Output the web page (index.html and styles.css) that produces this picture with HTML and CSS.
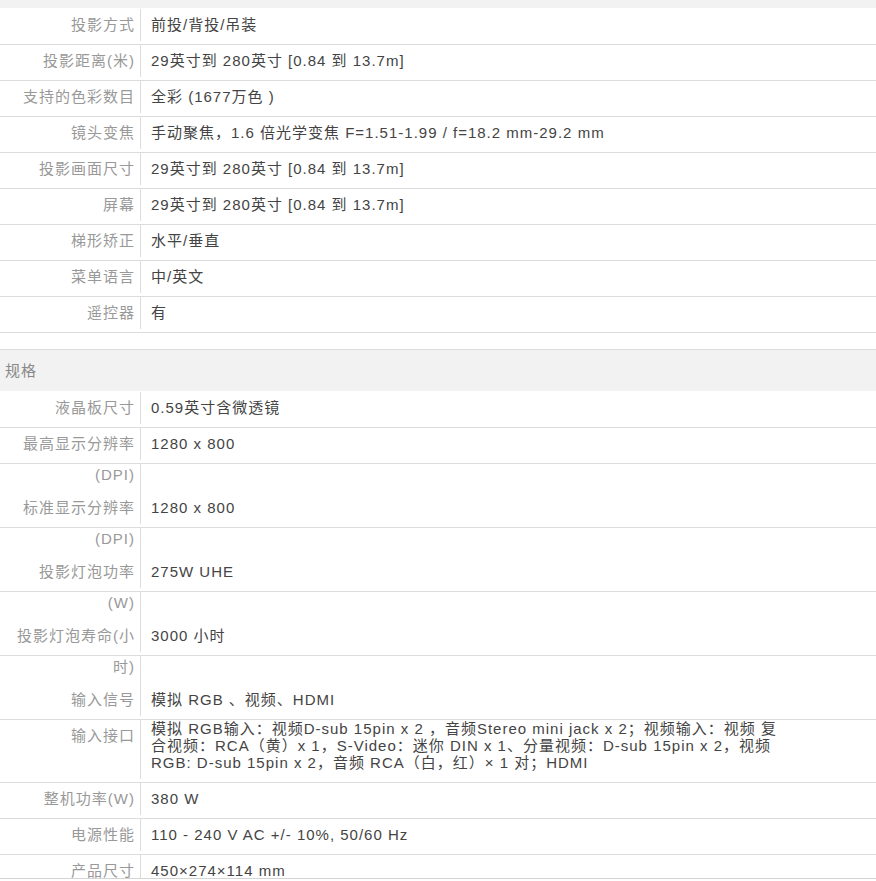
FILE: index.html
```html
<!DOCTYPE html>
<html lang="zh-CN">
<head>
    <meta charset="UTF-8">
    <meta name="viewport" content="width=device-width, initial-scale=1.0">
    <title>产品参数</title>
    <link rel="stylesheet" href="styles.css">
</head>
<body>
    <div class="params">
        <div class="section-end"></div>
        <div class="spec-list">
            <div class="row"><div class="name">投影方式</div><div class="val">前投/背投/吊装</div></div>
            <div class="row"><div class="name">投影距离(米)</div><div class="val">29英寸到 280英寸 [0.84 到 13.7m]</div></div>
            <div class="row"><div class="name">支持的色彩数目</div><div class="val">全彩 (1677万色 )</div></div>
            <div class="row"><div class="name">镜头变焦</div><div class="val">手动聚焦，1.6 倍光学变焦 F=1.51-1.99 / f=18.2 mm-29.2 mm</div></div>
            <div class="row"><div class="name">投影画面尺寸</div><div class="val">29英寸到 280英寸 [0.84 到 13.7m]</div></div>
            <div class="row"><div class="name">屏幕</div><div class="val">29英寸到 280英寸 [0.84 到 13.7m]</div></div>
            <div class="row"><div class="name">梯形矫正</div><div class="val">水平/垂直</div></div>
            <div class="row"><div class="name">菜单语言</div><div class="val">中/英文</div></div>
            <div class="row"><div class="name">遥控器</div><div class="val">有</div></div>
        </div>

        <div class="section">
            <div class="section-title">规格</div>
            <div class="spec-list">
                <div class="row"><div class="name">液晶板尺寸</div><div class="val">0.59英寸含微透镜</div></div>
                <div class="row"><div class="name">最高显示分辨率</div><div class="val">1280 x 800</div></div>
                <div class="row tall"><div class="name"><div class="carry">(DPI)</div>标准显示分辨率</div><div class="val">1280 x 800</div></div>
                <div class="row tall"><div class="name"><div class="carry">(DPI)</div>投影灯泡功率</div><div class="val">275W UHE</div></div>
                <div class="row tall"><div class="name"><div class="carry">(W)</div>投影灯泡寿命(小</div><div class="val">3000 小时</div></div>
                <div class="row tall"><div class="name"><div class="carry">时)</div>输入信号</div><div class="val">模拟 RGB 、视频、HDMI</div></div>
                <div class="row"><div class="name">输入接口</div><div class="val multi">模拟 RGB输入：视频D-sub 15pin x 2 ，音频Stereo mini jack x 2；视频输入：视频 复<br>合视频：RCA（黄）x 1，S-Video：迷你 DIN x 1、分量视频：D-sub 15pin x 2，视频<br>RGB: D-sub 15pin x 2，音频 RCA（白，红）× 1 对；HDMI</div></div>
                <div class="row"><div class="name">整机功率(W)</div><div class="val">380 W</div></div>
                <div class="row"><div class="name">电源性能</div><div class="val">110 - 240 V AC +/- 10%, 50/60 Hz</div></div>
                <div class="row"><div class="name">产品尺寸</div><div class="val">450×274×114 mm</div></div>
            </div>
        </div>
    </div>
</body>
</html>
```

FILE: styles.css
```css
body {
    margin: 0;
    background: #fff;
    font-family: 'Liberation Sans', Arial, 'Noto Sans CJK SC', sans-serif;
    font-size: 15px;
    letter-spacing: 1px;
}
.params {
    height: 878px;
    overflow: hidden;
    border-bottom: 1px solid #d4d4d4;
}
.section-end {
    height: 8px;
    background: #f2f2f2;
}
.spec-list {
    padding-top: 1px;
}
.row {
    display: flex;
    border-bottom: 1px solid #dcdcdc;
}
.name {
    flex: none;
    width: 141px;
    padding-right: 5px;
    box-sizing: border-box;
    margin-bottom: 3px;
    border-right: 1px solid #dcdcdc;
    text-align: right;
    line-height: 32px;
    color: #999;
    white-space: nowrap;
}
.val {
    padding-left: 10px;
    line-height: 32px;
    color: #444;
    white-space: nowrap;
}
.tall .carry {
    line-height: 22px;
    margin-bottom: 6px;
}
.tall .val {
    padding-top: 28px;
}
/* centred full-width punctuation, as in the original */
.val.multi {
    font-family: 'Liberation Sans', Arial, 'Noto Sans CJK TC', sans-serif;
    line-height: 17px;
    padding-bottom: 11px;
}
.section {
    margin-top: 16px;
    border-top: 1px solid #dcdcdc;
}
.section-title {
    background: #f2f2f2;
    height: 41px;
    line-height: 41px;
    padding-left: 5px;
    color: #888;
}
```
